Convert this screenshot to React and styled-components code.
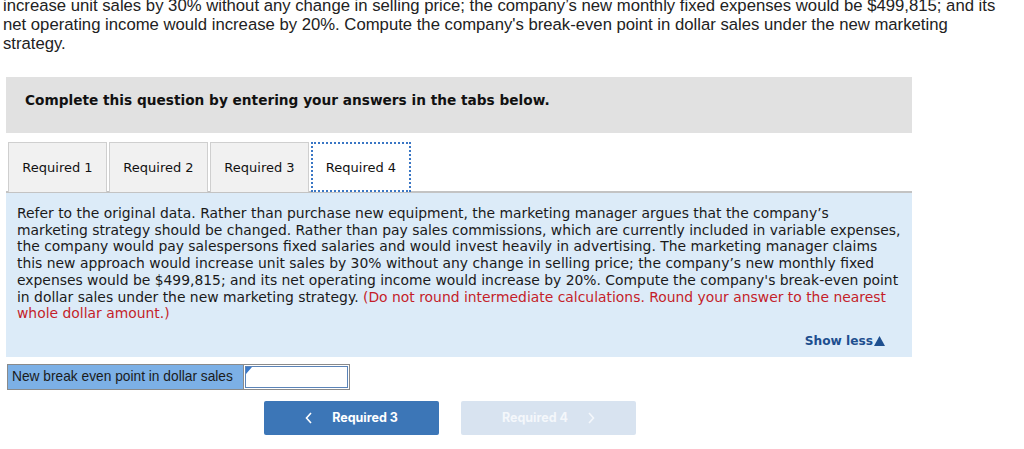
import React, { useState } from 'react';
import styled, { createGlobalStyle } from 'styled-components';

const GlobalStyle = createGlobalStyle`
  html, body {
    margin: 0;
    padding: 0;
    background: #fff;
  }
`;

const Page = styled.div`
  width: 1024px;
  height: 449px;
  overflow: hidden;
`;

const Intro = styled.p`
  margin: -4px 0 0 3px;
  width: 1015px;
  font-family: 'Liberation Sans', Arial, sans-serif;
  font-size: 16.7px;
  line-height: 19px;
  color: #222;
  white-space: nowrap;
`;

const Section = styled.div`
  margin: 24px 0 0 6px;
  width: 906px;
`;

const Banner = styled.div`
  height: 56px;
  box-sizing: border-box;
  background: #e1e1e1;
  padding: 14px 0 0 19px;
  font-family: 'DejaVu Sans', Verdana, sans-serif;
  font-weight: bold;
  font-size: 13.7px;
  line-height: 18px;
  color: #111;
`;

const TabBar = styled.div`
  display: flex;
  gap: 2px;
  margin-top: 9px;
  padding-left: 2px;
  border-bottom: 2px solid #c3c3c3;
`;

const Tab = styled.button`
  width: ${(p) => (p.$active ? '100px' : '99px')};
  height: 50px;
  margin-bottom: -1px;
  box-sizing: border-box;
  font-family: 'DejaVu Sans', Verdana, sans-serif;
  font-size: 13px;
  color: #111;
  background: ${(p) => (p.$active ? '#fff' : '#f1f1f1')};
  border: ${(p) => (p.$active ? '2px dotted #3a76c4' : '1px solid #cfcfcf')};
  border-bottom: ${(p) => (p.$active ? '2px dotted #3a76c4' : 'none')};
  padding: 0;
  cursor: pointer;
`;

const Panel = styled.div`
  background: #dcebf8;
  padding: 12px 8px 7px 11px;
  font-family: 'DejaVu Sans', Verdana, sans-serif;
  font-size: 13.9px;
  line-height: 16.7px;
  color: #1a1a1a;
  white-space: nowrap;
`;

const Red = styled.span`
  color: #c41e2a;
`;

const ShowLess = styled.div`
  display: flex;
  justify-content: flex-end;
  align-items: center;
  gap: 1px;
  margin-top: 11px;
  padding-right: 19px;
  font-weight: bold;
  font-size: 12.2px;
  color: #1e4f8f;
`;

const AnswerRow = styled.div`
  display: flex;
  margin: 7px 0 0 7px;
`;

const Label = styled.div`
  width: 236px;
  height: 26px;
  box-sizing: border-box;
  background: #7cb0e6;
  border: 1px solid #8a8a8a;
  border-right: none;
  display: flex;
  align-items: center;
  padding-left: 4px;
  font-family: 'Liberation Sans', Arial, sans-serif;
  font-size: 13.75px;
  color: #1b1b1b;
`;

const InputWrap = styled.div`
  position: relative;
  width: 107px;
  height: 26px;
  box-sizing: border-box;
  border: 1px solid #8a8a8a;
  padding: 1px;
  background: #fff;
`;

const Input = styled.input`
  width: 100%;
  height: 100%;
  box-sizing: border-box;
  border: 1px solid #5b84b8;
  outline: none;
  font-family: 'Liberation Sans', Arial, sans-serif;
  font-size: 14px;
`;

const Flag = styled.span`
  position: absolute;
  top: 2px;
  left: 2px;
  width: 0;
  height: 0;
  border-top: 7px solid #3a78c8;
  border-right: 6px solid transparent;
`;

const NavRow = styled.div`
  display: flex;
  gap: 22px;
  margin: 11px 0 0 264px;
`;

const NavButton = styled.button`
  width: 175px;
  height: 34px;
  border: none;
  border-radius: 2px;
  background: ${(p) => (p.$disabled ? '#d8e3f0' : '#3c76b7')};
  color: ${(p) => (p.$disabled ? '#f4f7fb' : '#fff')};
  font-family: Inter, 'Liberation Sans', Arial, sans-serif;
  font-weight: bold;
  font-size: 12.5px;
  display: flex;
  align-items: center;
  justify-content: center;
  gap: 20px;
  cursor: ${(p) => (p.$disabled ? 'default' : 'pointer')};
  padding: 0;
`;

const Chevron = ({ dir }) => (
  <svg width="7" height="12" viewBox="0 0 7 12" fill="none">
    <path
      d={dir === 'left' ? 'M6 1 L1.5 6 L6 11' : 'M1 1 L5.5 6 L1 11'}
      stroke="currentColor"
      strokeWidth="1.6"
    />
  </svg>
);

const Triangle = () => (
  <svg width="11" height="10" viewBox="0 0 11 10">
    <path d="M5.5 0 L11 10 L0 10 Z" fill="#1e4f8f" />
  </svg>
);

export default function App() {
  const [value, setValue] = useState('');
  const tabs = ['Required 1', 'Required 2', 'Required 3', 'Required 4'];

  return (
    <Page>
      <GlobalStyle />
      <Intro>
        increase unit sales by 30% without any change in selling price; the company’s new monthly fixed expenses would be $499,815; and its
        <br />
        net operating income would increase by 20%. Compute the company's break-even point in dollar sales under the new marketing
        <br />
        strategy.
      </Intro>
      <Section>
        <Banner>Complete this question by entering your answers in the tabs below.</Banner>
        <TabBar>
          {tabs.map((t, i) => (
            <Tab key={t} $active={i === 3}>
              {t}
            </Tab>
          ))}
        </TabBar>
        <Panel>
          Refer to the original data. Rather than purchase new equipment, the marketing manager argues that the company’s
          <br />
          marketing strategy should be changed. Rather than pay sales commissions, which are currently included in variable expenses,
          <br />
          the company would pay salespersons fixed salaries and would invest heavily in advertising. The marketing manager claims
          <br />
          this new approach would increase unit sales by 30% without any change in selling price; the company’s new monthly fixed
          <br />
          expenses would be $499,815; and its net operating income would increase by 20%. Compute the company's break-even point
          <br />
          in dollar sales under the new marketing strategy.{' '}
          <Red>
            (Do not round intermediate calculations. Round your answer to the nearest
            <br />
            whole dollar amount.)
          </Red>
          <ShowLess>
            Show less
            <Triangle />
          </ShowLess>
        </Panel>
      </Section>
      <AnswerRow>
        <Label>New break even point in dollar sales</Label>
        <InputWrap>
          <Flag />
          <Input value={value} onChange={(e) => setValue(e.target.value)} />
        </InputWrap>
      </AnswerRow>
      <NavRow>
        <NavButton>
          <Chevron dir="left" />
          Required 3
        </NavButton>
        <NavButton $disabled>
          Required 4
          <Chevron dir="right" />
        </NavButton>
      </NavRow>
    </Page>
  );
}
